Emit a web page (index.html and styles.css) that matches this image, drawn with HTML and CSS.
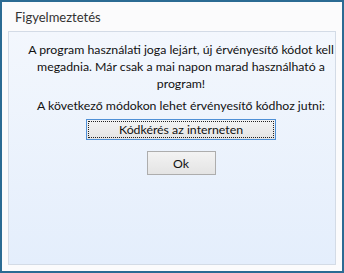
FILE: index.html
```html
<!DOCTYPE html>
<html lang="hu">
<head>
    <meta charset="UTF-8">
    <title>Figyelmeztetés</title>
    <link rel="stylesheet" href="styles.css">
</head>
<body>
    <div id="dialog">
        <div class="title">Figyelmeztetés</div>
        <div class="panel">
            <p class="message">A program használati joga lejárt, új érvényesítő kódot kell megadnia. Már csak a mai napon marad használható a program!</p>
            <p class="ways">A következő módokon lehet érvényesítő kódhoz jutni:</p>
            <button class="btn wide">Kódkérés az interneten</button>
            <button class="btn ok">Ok</button>
        </div>
    </div>
</body>
</html>
```

FILE: styles.css
```css
*{
    margin: 0;
    padding: 0;
    box-sizing: border-box;
}
body{
    width: 344px;
    height: 273px;
    font-family: Lato, "Open Sans", sans-serif;
    font-size: 12.3px;
    color: #111;
}
#dialog{
    width: 344px;
    height: 273px;
    border: 2px solid #2b6b93;
    background-color: #fbfbfc;
    display: flex;
    flex-direction: column;
    padding: 0 6px 6px 6px;
}
.title{
    height: 29px;
    line-height: 30px;
    padding-left: 7px;
    font-size: 13px;
    color: #333;
}
.panel{
    flex: 1;
    border: 1px solid #d3dbe6;
    background: linear-gradient(#f3f7fd, #e4eefc);
    display: flex;
    flex-direction: column;
    align-items: center;
    padding-top: 9px;
    padding-left: 18px;
}
.message{
    width: 306px;
    text-align: center;
    line-height: 17px;
}
.ways{
    margin-top: 5px;
    text-align: center;
    line-height: 17px;
}
.btn{
    font-family: inherit;
    font-size: 12.3px;
    color: #111;
    background: linear-gradient(#f3f3f3, #e4e4e4);
    border: 1px solid #adadad;
}
.wide{
    width: 190px;
    height: 21px;
    margin-top: 5px;
    outline: 1px dotted #222;
    outline-offset: -3px;
    border-color: #4d8fd6;
}
.ok{
    width: 69px;
    height: 24px;
    margin-top: 11px;
}
```
